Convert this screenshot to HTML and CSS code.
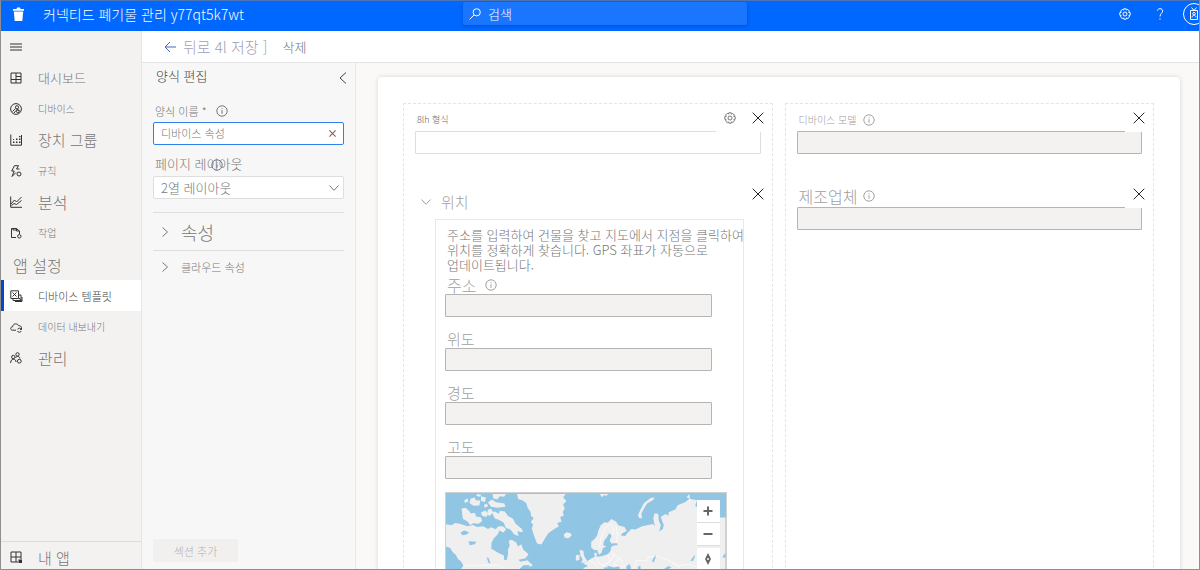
FILE: index.html
```html
<!DOCTYPE html>
<html lang="ko">
<head>
<meta charset="utf-8">
<title>커넥티드 폐기물 관리</title>
<link rel="stylesheet" href="styles.css">
</head>
<body>
<svg class="defs" aria-hidden="true">
  <symbol id="info" viewBox="0 0 12 12"><circle cx="6" cy="6" r="5.2"/><path d="M6 5.2V8.8M6 3.2V4.2"/></symbol>
  <symbol id="close" viewBox="0 0 12 12"><path d="M.7.7 11.3 11.3M11.3.7.7 11.3"/></symbol>
  <symbol id="gear" viewBox="0 0 12 12"><path d="M4.8.8h2.4l.3 1.3 1.2-.7 1.700 1.700-.7 1.200 1.500.4v2.500l-1.400.4.7 1.300-1.700 1.600-1.300-.6-.4 1.300H4.900l-.4-1.300-1.300.6-1.700-1.600.7-1.300L.8 7.200V4.700l1.500-.4-.7-1.200 1.700-1.700 1.200.7z"/><circle cx="6" cy="6" r="2"/></symbol>
  <symbol id="right" viewBox="0 0 12 12"><path d="M3.5 1.5 8.5 6 3.5 10.5"/></symbol>
  <symbol id="down" viewBox="0 0 12 12"><path d="M1.5 3.5 6 8.3 10.5 3.5"/></symbol>
</svg>
<div class="app">
  <header class="topbar">
    <svg class="trash" viewBox="0 0 13 14"><path d="M1 2h3.5L5 .5h3L8.500 2H12v1.800H1zM1.800 4.500h9.400L10.300 14H2.700z"/></svg>
    <h1 class="brand">커넥티드 폐기물 관리 y77qt5k7wt</h1>
    <div class="search">
      <svg class="icon" viewBox="0 0 12 12"><circle cx="7.700" cy="4.300" r="3.600"/><path d="M5 7 .5 11.500"/></svg>
      <input type="search" placeholder="검색" aria-label="검색">
    </div>
    <div class="top-actions">
      <button class="icon-btn" aria-label="설정"><svg class="icon"><use href="#gear"/></svg></button>
      <button class="icon-btn" aria-label="도움말"><svg class="icon" viewBox="0 0 12 12"><path d="M3.300 2.500C3.500.2 8.700-.1 8.700 3c0 2.100-2.700 2.600-2.700 5.500M6 10.300v1.400"/></svg></button>
      <button class="avatar" aria-label="계정"><svg viewBox="0 0 22 22"><circle cx="11" cy="11" r="10.500"/><path d="M7.500 7.500h7v9h-7zM8.500 4.500l2.500 3 2.500-3M9 14.500c.3-3 3.700-3 4 0"/><circle cx="11" cy="10.700" r="1.300"/></svg></button>
    </div>
  </header>
  <div class="body">
    <nav class="sidebar">
      <button class="nav-item" aria-label="메뉴"><svg class="icon" viewBox="0 0 12 12"><path d="M0 3h12M0 6h12M0 9h12"/></svg></button>
      <a class="nav-item t13" href="#"><svg class="icon" viewBox="0 0 12 12"><path d="M1 1h10v10H1zM1 7.500h10M6 1v10M6 4.500h5"/></svg>대시보드</a>
      <a class="nav-item t10" href="#"><svg class="icon" viewBox="0 0 12 12"><circle cx="6" cy="6" r="5.400"/><path d="M2.500 8.500 5.500 5.500M6.500 6.500l3 1M4 10l2-2.500"/><circle cx="7" cy="4.300" r="1.600"/><circle cx="7.800" cy="8.300" r="1.400"/></svg>디바이스</a>
      <a class="nav-item t15" href="#"><svg class="icon" viewBox="0 0 12 12"><path d="M.8.500v10.700h10.700V1"/><path class="dots" d="M3 7.500h1.500V9H3zM6 7.500h1.500V9H6zM9 7.500h1.500V9H9zM6 4.500h1.500V6H6zM9 4.500h1.500V6H9zM9 2h1.500v1.300H9zM3 5h1v1H3z"/></svg>장치 그룹</a>
      <a class="nav-item t10" href="#"><svg class="icon" viewBox="0 0 12 12"><path d="M4.500.700h4L6.500 4h3M4.500.700 1.700 6h2.500L2 11.500 6 7.500"/><circle cx="9" cy="9" r="2"/></svg>규칙</a>
      <a class="nav-item t16" href="#"><svg class="icon" viewBox="0 0 12 12"><path d="M.7.500v10.800H12M1 8l3.500-4 2 2L11.500 1M1.500 9.500 4 7.500l2.500 1 5-4"/></svg>분석</a>
      <a class="nav-item t10" href="#"><svg class="icon" viewBox="0 0 12 12"><path d="M6 10.500H1.500v-9h5L9.500 4v3M3 1v2h3.500M6.500 1.500V4h3"/><circle cx="9.300" cy="9.300" r="1.700"/></svg>작업</a>
      <h2 class="nav-head">앱 설정</h2>
      <a class="nav-item t11 active" href="#" aria-current="page"><svg class="icon" viewBox="0 0 12 12"><path d="M.8.800h7.700v7.700H.8zM2.500 6.500l4-4M2.500 2.500l4 4M3 9v1.500h8V5H9M5 11.500h7V7M9 8l2.500 3"/></svg>디바이스 템플릿</a>
      <a class="nav-item t10" href="#"><svg class="icon" viewBox="0 0 12 12"><path d="M6 9.200H2.500C0 9 .2 5.800 2.600 5.800 2.800 2.400 7.500 1.800 8.500 4.700c1.900-.2 3 .8 3 2.100"/><path d="M11.300 8.300A2 2 0 0 0 7.600 8.500M7.500 10a2 2 0 0 0 3.700 0M11.500 7v1.500H10"/></svg>데이터 내보내기</a>
      <a class="nav-item t16" href="#"><svg class="icon" viewBox="0 0 12 12"><circle cx="3.300" cy="5" r="1.700"/><circle cx="7.500" cy="2.400" r="1.700"/><path d="M.6 11C.6 6 6 6 6 10M5.500 5.700c1.500-2 4-1.500 4.500.8"/><circle cx="9.300" cy="9.200" r="1.900"/></svg>관리</a>
      <a class="nav-item t15 my-apps" href="#"><svg class="icon" viewBox="0 0 12 12"><path d="M8 11H1V1h10v7M6 1v10M1 6h10"/><path class="dots" d="M8.500 8.500H12V12H8.500z"/></svg>내 앱</a>
    </nav>
    <div class="workspace">
      <div class="commands">
        <button class="back"><svg class="icon" viewBox="0 0 12 12"><path d="M6 1 1 6l5 5M1 6h11"/></svg>뒤로 4l 저장 ]</button>
        <button class="delete">삭제</button>
      </div>
      <div class="editor">
        <section class="panel">
          <div class="panel-head"><h2>양식 편집</h2><button class="icon-btn" aria-label="접기"><svg class="icon" viewBox="0 0 12 12"><path d="M9 .5 3 6l6 5.500"/></svg></button></div>
          <div class="panel-label small"><label for="name">양식 이름 *</label><svg class="icon"><use href="#info"/></svg></div>
          <div class="box focus"><input id="name" type="text" value="디바이스 속성"><button class="clear" aria-label="지우기"><svg><use href="#close"/></svg></button></div>
          <div class="panel-label"><label for="layout">페이지 레이아웃</label><svg class="icon over"><use href="#info"/></svg></div>
          <div class="box"><select id="layout"><option>2열 레이아웃</option></select><svg class="icon caret"><use href="#down"/></svg></div>
          <button class="fold large"><svg class="icon"><use href="#right"/></svg>속성</button>
          <button class="fold"><svg class="icon"><use href="#right"/></svg>클라우드 속성</button>
          <button class="add" disabled>섹션 추가</button>
        </section>
        <main class="canvas">
          <div class="card">
            <div class="column">
              <div class="field">
                <div class="label tiny"><label for="bin">8lh 형식</label></div>
                <input id="bin" class="entry open" type="text">
                <div class="tools"><button aria-label="설정"><svg class="icon tool-gear"><use href="#gear"/></svg></button><button aria-label="제거"><svg class="icon"><use href="#close"/></svg></button></div>
              </div>
              <div class="field">
                <h3 class="group-title"><svg class="icon"><use href="#down"/></svg>위치</h3>
                <div class="tools"><button aria-label="제거"><svg class="icon"><use href="#close"/></svg></button></div>
                <div class="group">
                  <p class="hint">주소를 입력하여 건물을 찾고 지도에서 지점을 클릭하여<br>위치를 정확하게 찾습니다. GPS 좌표가 자동으로<br>업데이트됩니다.</p>
                  <div class="sub"><div class="label wide"><label for="addr">주소</label><svg class="icon"><use href="#info"/></svg></div><input id="addr" class="entry" type="text" readonly></div>
                  <div class="sub"><div class="label mid"><label for="lat">위도</label></div><input id="lat" class="entry" type="text" readonly></div>
                  <div class="sub"><div class="label mid"><label for="lon">경도</label></div><input id="lon" class="entry" type="text" readonly></div>
                  <div class="sub"><div class="label mid"><label for="alt">고도</label></div><input id="alt" class="entry" type="text" readonly></div>
                  <div class="map">
                    <svg class="world" viewBox="13 21 847 300" role="img" aria-label="지도">
                      <g class="land">
                        <path d="M13 116 30 119 40 112 55 114 64 117 78 122 94 118 108 124 126 122 140 130 150 125 163 131 172 122 178 126 170 146 158 158 151 172 150 190 166 199 178 206 188 210 189 223 197 224 201 208 201 192 206 180 203 166 212 163 226 171 231 183 241 176 247 192 263 207 254 219 232 223 239 229 260 225 271 237 258 240 248 240 235 252 240 321H55L58 252 66 241 58 228 49 221 43 209 33 200 26 188 13 183z"/>
                        <path d="M228 24H376L368 34 378 45 368 56 373 68 367 78 370 90 359 94 363 108 350 112 355 122 339 132 324 142 315 155 308 167 302 177 289 174 283 159 277 143 273 128 277 117 270 109 279 97 271 91 269 78 261 67 256 51 244 43 232 40z"/>
                        <path d="M60 68 72 66 82 74 88 83 100 81 105 93 118 94 123 106 112 114 96 113 86 118 78 107 64 99zM88 38l12-3 3 8 14 1-3 15-18 1-12-9zM68 43l10-5 3 8-10 5zM119 31l15 4-3 13-12-3zM140 50l12-9 13 8 25 4 3 10-25 3-18-3zM154 24h41l-6 8-13-1-8 10-12-4zM119 80l13-6 8 11-5 9-13-4zM140 72l9-3 7 10-11 12-8-6zM160 76l13 8 3-9 15 2 10 14 15 8 8 15 19 16 3 10-17-3 4 14-13-4-12-15-14-6-6-15-15-9-12-4-8-16zM175 121l13 2 7 9-8 9-13-6zM107 24l13 2-4 6-11-2zM128 57l9-4 3 9-10 3zM262 236l10-1 3 7-9 2zM479 24h25l-4 5-9-1-5 6z"/>
                        <path d="M370 147 378 140 391 143 394 150 383 159 372 156zM407 210l11-2-1 16-11 2zM418 193l11 3 3 17 9 13-3 5-15 2 4-11-6-10z"/>
                        <path d="M598 97 595 88 603 70 613 51 633 36 645 35 641 42 622 53 613 68 605 83 607 98z"/>
                        <path d="M428 321 430 248 443 242 429 235 444 226 454 219 464 214 462 203 470 202 469 214 484 213 503 207 513 195 512 187 520 180 533 179 532 173 514 174 509 166 515 150 508 143 501 154 491 168 490 179 499 183 489 188 484 202 477 208 471 194 462 194 453 186 453 169 464 160 471 150 475 134 482 119 493 110 503 111 514 100 529 108 535 119 554 124 561 136 547 143 543 150 556 151 564 141 575 130 587 132 607 122 623 119 640 115 646 122 641 98 645 82 656 85 658 106 664 118 659 138 670 130 673 119 664 94 678 85 687 90 688 79 708 71 715 58 739 48 751 38 742 34 750 24 753 39 774 43 768 60 780 69H837V95H860V321z"/>
                      </g>
                      <path class="water" d="M57 141l11-6 15 5-7 7-14 2zM81 167l25 2-7 7-14 3zM136 216l6 2 6 17-6-2zM637 228l10-19 3 3-7 20zM753 227l13-17 2 2-6 14zM850 216l10-14v15zM490 248l15-6 17 5 17-4v16l-38 2zM559 240l10-3 5 10-4 19-10-6zM594 245l8-4 1 13-7 3zM673 252l13-9 11 2-15 11z"/>
                      <path class="borders" d="M65 240H178L188 253H219M478 186l5-30 12-28 15-12M512 113l10 25-6 12M527 118l6 30-4 24M513 196l9 14 17 8 10 15M503 207l7 22-21 11M444 226l22 8 10 18M469 214l8 21 25 12M522 210l-14 20M539 218l-19 20 22 5 22-2M580 251l10-26 30 2 8-12 25-3 30 11 35 19 30-5 24 8M702 232l18 13"/>
                    </svg>
                    <div class="map-tools">
                      <button aria-label="확대"><svg viewBox="0 0 12 12"><path d="M6 1.500v9M1.500 6h9"/></svg></button>
                      <button aria-label="축소"><svg viewBox="0 0 12 12"><path d="M1.500 6h9"/></svg></button>
                      <button class="compass" aria-label="나침반"><svg viewBox="0 0 12 12"><path d="M6 0 9 6 6 12 3 6z"/><circle cx="6" cy="6" r="1"/></svg></button>
                    </div>
                  </div>
                </div>
              </div>
            </div>
            <div class="column">
              <div class="field">
                <div class="label short"><label for="model">디바이스 모델</label><svg class="icon"><use href="#info"/></svg></div>
                <input id="model" class="entry" type="text" readonly>
                <div class="tools"><button aria-label="제거"><svg class="icon"><use href="#close"/></svg></button></div>
              </div>
              <div class="field">
                <div class="label"><label for="maker">제조업체</label><svg class="icon"><use href="#info"/></svg></div>
                <input id="maker" class="entry" type="text" readonly>
                <div class="tools"><button aria-label="제거"><svg class="icon"><use href="#close"/></svg></button></div>
              </div>
            </div>
          </div>
        </main>
      </div>
    </div>
  </div>
</div>
</body>
</html>
```
FILE: styles.css
```css
* { box-sizing: border-box; }
body {
  margin: 0;
  font-family: "Noto Sans CJK KR", "Noto Sans", sans-serif;
  font-weight: 300;
  font-size: 13px;
  color: #777;
}
button, input, select { font: inherit; color: inherit; }
button { border: 0; padding: 0; background: none; }
h1, h2, h3, p { margin: 0; font-weight: 300; }
a { color: inherit; text-decoration: none; }
svg { fill: none; stroke: currentColor; flex: none; }
.defs { position: absolute; width: 0; height: 0; }
.icon { width: 12px; height: 12px; overflow: visible; }

.app {
  display: flex;
  flex-direction: column;
  height: 100vh;
  border: 1px solid #8f8f8f;
  border-top-color: #4a74b4;
  overflow: hidden;
}

.topbar {
  display: grid;
  grid-template-columns: 462px minmax(0, 284px) 1fr;
  flex: none;
  height: 30px;
  position: relative;
  align-items: center;
  background: #0067ff;
  color: #fff;
  overflow: hidden;
}
.trash {
  position: absolute;
  left: 11px;
  top: 6px;
  width: 13px;
  height: 14px;
  fill: #fff;
  stroke: none;
}
.brand { padding: 0 0 4px 42px; font-size: 14px; line-height: 26px; white-space: nowrap; }
.search {
  display: flex;
  align-items: center;
  gap: 7px;
  height: 23px;
  margin-bottom: 5px;
  padding: 0 6px;
  border-radius: 2px;
  background: #1a76ff;
  box-shadow: 0 1px 3px rgba(0, 40, 120, .35);
}
.search input { flex: 1; min-width: 0; height: 22px; padding: 0; border: 0; outline: 0; background: none; }
.search input::placeholder { color: #fff; opacity: 1; }
.top-actions { display: flex; justify-content: flex-end; align-items: center; gap: 12px; margin-right: -6px; padding-bottom: 4px; }
.icon-btn { display: grid; place-items: center; width: 23px; height: 23px; }
.avatar { width: 22px; height: 22px; }
.avatar svg { display: block; width: 22px; height: 22px; }

.body { display: flex; flex: 1; min-height: 0; }
.sidebar {
  display: flex;
  flex-direction: column;
  flex: none;
  width: 141px;
  border-right: 1px solid #e4e4e4;
  background: #f3f2f1;
}
.nav-item {
  display: flex;
  align-items: center;
  gap: 16px;
  flex: none;
  height: 31px;
  padding-left: 9px;
}
.nav-item .icon { color: #333; }
.dots { fill: currentColor; stroke: none; }
.t10 { font-size: 10px; }
.t11 { font-size: 11px; }
.t13 { font-size: 13px; }
.t15 { font-size: 15px; }
.t16 { font-size: 16px; }
.nav-head { height: 32px; padding-left: 12px; font-size: 16px; line-height: 35px; }
.active { padding-left: 6px; border-left: 3px solid #0b45c4; background: #fff; color: #444; }
.my-apps { margin-top: auto; height: 28px; padding-top: 3px; border-top: 1px solid #dcdcdc; }

.workspace { display: flex; flex-direction: column; flex: 1; min-width: 0; }
.commands {
  display: flex;
  align-items: center;
  gap: 15px;
  flex: none;
  height: 32px;
  padding-left: 22px;
  border-bottom: 1px solid #e4e4e4;
  background: #fff;
}
.back { display: flex; align-items: center; gap: 7px; font-size: 15px; line-height: 22px; color: #a0a0b8; }
.back .icon { color: #4a64cc; }
.delete { line-height: 22px; font-size: 13px; }
.editor { display: flex; flex: 1; min-height: 0; }

.panel {
  display: flex;
  flex-direction: column;
  flex: none;
  width: 214px;
  padding: 0 11px 7px;
  border-right: 1px solid #e6e6e6;
  background: #f7f7f7;
}
.panel-head { display: flex; justify-content: space-between; height: 28px; padding-left: 3px; margin-right: -10px; color: #444; }
.panel-head h2 { font-size: 13px; line-height: 26px; }
.panel-head .icon-btn { height: 30px; }
.panel-label { display: flex; align-items: center; position: relative; gap: 9px; height: 31px; padding: 7px 0 0 2px; line-height: 20px; }
.panel-label.small { font-size: 11px; padding-top: 9px; }
.over { position: absolute; left: 58px; top: 14px; }
.box {
  display: flex;
  align-items: center;
  position: relative;
  height: 23px;
  border: 1px solid #dedede;
  border-radius: 2px;
  background: #fff;
}
.box.focus { border-color: #2f80ed; font-size: 11px; }
.box input, .box select { flex: 1; min-width: 0; height: 20px; margin-bottom: 1px; padding: 0 7px; border: 0; outline: 0; background: none; appearance: none; }
.clear { display: grid; place-items: center; width: 22px; height: 21px; color: #8a6656; }
.clear svg { width: 7px; height: 7px; stroke-width: 2; }
.caret { position: absolute; right: 3px; pointer-events: none; }
.fold { display: flex; align-items: center; gap: 10px; height: 32px; padding-left: 6px; border-top: 1px solid #dedede; font-size: 11px; }
.large { height: 38px; margin-top: 13px; font-size: 18px; }
.add { align-self: flex-start; margin-top: auto; width: 85px; height: 23px; border-radius: 2px; background: #f1f0ef; color: #b0b0b0; font-size: 11px; line-height: 22px; }

.canvas { flex: 1; min-width: 0; padding: 14px 19px 0 22px; background: #faf9f8; overflow: hidden; }
.card {
  display: grid;
  grid-template-columns: 1fr 1fr;
  gap: 12px;
  min-height: 100%;
  padding: 26px 26px 25px 25px;
  border-radius: 4px;
  background: #fff;
  box-shadow: 0 0 5px rgba(0, 0, 0, .14);
}
.column { min-width: 0; padding: 0 11px; border: 1px dashed #e4e4e4; }
.field { position: relative; margin-bottom: 26px; }
.label { display: flex; align-items: center; gap: 6px; height: 27px; padding: 5px 0 0 2px; font-size: 16px; line-height: 20px; color: #a0a0a0; }
.label.tiny { font-size: 9px; color: #666; }
.label.short { font-size: 10px; }
.label.wide { gap: 9px; }
.label.mid { font-size: 15px; }
.entry { display: block; width: 100%; height: 23px; padding: 0 7px; border: 1px solid #b4b4b4; border-radius: 1px; outline: 0; background: #f3f2f1; }
.entry.open { border-color: #dedede; background: #fff; }
.tools { display: flex; position: absolute; top: 0; right: -11px; background: #fff; color: #222; }
.tools button { display: grid; place-items: center; width: 28px; height: 28px; }
.tools .tool-gear { color: #777; }
.group-title { display: flex; align-items: center; gap: 9px; height: 39px; padding: 4px 0 0 5px; font-size: 15px; color: #a0a0a0; }
.group { margin: 0 17px 0 20px; padding: 7px 9px; border: 1px solid #e8e8e8; }
.hint { margin-right: -9px; padding-left: 2px; line-height: 15px; white-space: nowrap; }
.sub { margin: 0 22px 9px 0; }
.sub .label { height: 22px; padding-top: 4px; }
.map { position: relative; margin: 13px 7px 0 0; border: 1px solid #d0d0d0; background: #90c5e4; overflow: hidden; }
.world { display: block; width: 100%; stroke: none; }
.land { fill: #efefef; }
.water { fill: #90c5e4; }
.borders { stroke: #fff; stroke-width: 2; }
.map-tools { position: absolute; top: 7px; right: 6px; width: 23px; }
.map-tools button { display: grid; place-items: center; width: 23px; height: 23px; background: #fff; border-bottom: 1px solid #ddd; color: #666; }
.map-tools svg { width: 12px; height: 12px; stroke-width: 2; }
.map-tools .compass { margin-top: 2px; }
.map-tools .compass path { fill: #666; stroke: none; }
.map-tools .compass circle { fill: #fff; stroke: none; }
```
